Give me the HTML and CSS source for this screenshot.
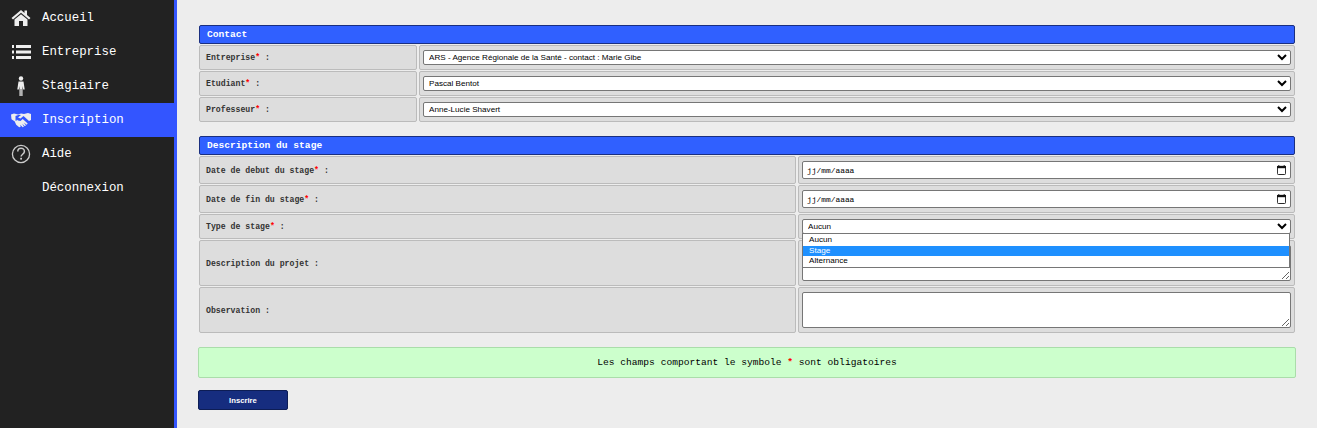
FILE: index.html
```html
<!DOCTYPE html>
<html lang="fr">
<head>
    <meta charset="utf-8">
    <title>Inscription</title>
    <link rel="stylesheet" href="styles.css">
</head>
<body>
<nav class="menu">
    <a class="menu-item" href="#">
        <svg class="menu-icon" viewBox="0 0 20 18"><path d="M10 1 L0.5 9 L2 10.5 L10 3.8 L18 10.5 L19.5 9 L16 6 V1.5 H13.5 V4 Z M10 5.2 L3.5 10.6 V17 H8 V12 H12 V17 H16.5 V10.6 Z" fill="#eee"/></svg>
        Accueil
    </a>
    <a class="menu-item" href="#">
        <svg class="menu-icon" viewBox="0 0 20 18"><path d="M1 2h2v3h-2z M5 2h15v3h-15z M1 7.500h2v3h-2z M5 7.500h15v3h-15z M1 13h2v3h-2z M5 13h15v3h-15z" fill="#eee"/></svg>
        Entreprise
    </a>
    <a class="menu-item" href="#">
        <svg class="menu-icon" viewBox="0 0 20 20"><circle cx="10" cy="2.500" r="2.200" fill="#eee"/><path d="M7.500 5.500h5l1.200 8h-1.500l-.7-3.500v10h-1.200v-7h-.6v7h-1.200v-10l-.7 3.500h-1.500z" fill="#eee"/></svg>
        Stagiaire
    </a>
    <a class="menu-item active" href="#">
        <svg class="menu-icon" viewBox="0 0 20 16"><path d="M0 2.500l3 -1 4 1 3-1 3 .5 4-1 3 1v6l-2 1-5.500-5-3 2.500-2.500-1 3-2.500-2-.3-3.500 1.300v4.800l-1 .5-3-2z M3.500 9l2.300-.5v-1l1.200 1 2.500.5 2.200-2 5 4.500-1 1.200-3-2.200 2.200 2.700-1 1-2.700-2.500 1.700 3-1.200.5-2.500-2.500.5 2-1.500.5-3-2.500z" fill="#eee"/></svg>
        Inscription
    </a>
    <a class="menu-item" href="#">
        <svg class="menu-icon" viewBox="0 0 20 20"><circle cx="10" cy="10" r="8.600" fill="none" stroke="#ccc" stroke-width="1.300"/><path d="M6.800 7.500c0-4.200 6.600-4.200 6.600 0 0 2.600-3.300 2.800-3.300 5" fill="none" stroke="#ccc" stroke-width="1.500"/><rect x="9.200" y="13.800" width="1.800" height="1.800" fill="#ccc"/></svg>
        Aide
    </a>
    <a class="menu-item" href="#"><span class="menu-icon"></span>Déconnexion</a>
</nav>

<main class="content">
    <section class="bloc">
        <h2 class="titre">Contact</h2>
        <div class="ligne col-contact">
            <div class="cell libelle"><label>Entreprise<span class="req">*</span> :</label></div>
            <div class="cell"><select class="champ"><option>ARS - Agence Régionale de la Santé - contact : Marie Gibe</option></select></div>
        </div>
        <div class="ligne col-contact">
            <div class="cell libelle"><label>Etudiant<span class="req">*</span> :</label></div>
            <div class="cell"><select class="champ"><option>Pascal Bentot</option></select></div>
        </div>
        <div class="ligne col-contact">
            <div class="cell libelle"><label>Professeur<span class="req">*</span> :</label></div>
            <div class="cell"><select class="champ"><option>Anne-Lucie Shavert</option></select></div>
        </div>
    </section>

    <section class="bloc">
        <h2 class="titre">Description du stage</h2>
        <div class="ligne col-stage">
            <div class="cell libelle"><label>Date de debut du stage<span class="req">*</span> :</label></div>
            <div class="cell">
                <div class="champ date"><span>jj/mm/aaaa</span>
                    <svg class="cal" viewBox="0 0 10 11"><path d="M2 0v1.500M8 0v1.500" stroke="#111"/><rect x=".5" y="1.500" width="9" height="9" rx="1" fill="none" stroke="#111"/><rect x="0" y="1" width="10" height="2.500" fill="#111"/></svg>
                </div>
            </div>
        </div>
        <div class="ligne col-stage">
            <div class="cell libelle"><label>Date de fin du stage<span class="req">*</span> :</label></div>
            <div class="cell">
                <div class="champ date"><span>jj/mm/aaaa</span>
                    <svg class="cal" viewBox="0 0 10 11"><path d="M2 0v1.500M8 0v1.500" stroke="#111"/><rect x=".5" y="1.500" width="9" height="9" rx="1" fill="none" stroke="#111"/><rect x="0" y="1" width="10" height="2.500" fill="#111"/></svg>
                </div>
            </div>
        </div>
        <div class="ligne col-stage">
            <div class="cell libelle"><label>Type de stage<span class="req">*</span> :</label></div>
            <div class="cell ouvert">
                <select class="champ"><option>Aucun</option></select>
                <ul class="liste">
                    <li>Aucun</li>
                    <li class="survol">Stage</li>
                    <li>Alternance</li>
                </ul>
            </div>
        </div>
        <div class="ligne col-stage">
            <div class="cell libelle"><label>Description du projet :</label></div>
            <div class="cell"><textarea class="champ zone"></textarea></div>
        </div>
        <div class="ligne col-stage">
            <div class="cell libelle"><label>Observation :</label></div>
            <div class="cell"><textarea class="champ zone"></textarea></div>
        </div>
    </section>

    <p class="note">Les champs comportant le symbole <span class="req">*</span> sont obligatoires</p>
    <button class="envoyer" type="button">Inscrire</button>
</main>
</body>
</html>
```

FILE: styles.css
```css
html, body { height: 100%; }
body {
    margin: 0;
    display: flex;
    overflow: hidden;
    background: #ededed;
    font-family: "Liberation Mono", "Courier New", monospace;
    color: #222;
}

/* menu de gauche */
.menu {
    width: 174px;
    flex: none;
    padding-top: 1px;
    background: #222;
    border-right: 3px solid #3355ff;
}
.menu-item {
    display: flex;
    align-items: center;
    height: 34px;
    padding-left: 11px;
    color: #fff;
    font-size: 12.4px;
    text-decoration: none;
}
.menu-item.active { background: #3355ff; }
.menu-icon {
    width: 20px;
    height: 20px;
    flex: none;
    margin-right: 11px;
}

.content {
    flex: 1;
    padding: 25px 21px 0;
    min-width: 0;
}

.bloc { margin: 0 1px 14px; }
.titre {
    margin: 0 0 1px;
    height: 19px;
    box-sizing: border-box;
    padding-left: 7px;
    border: 1px solid #1a2f80;
    border-radius: 2px;
    background: #3060ff;
    color: #fff;
    font-size: 9.600px;
    font-weight: bold;
    line-height: 17px;
}

.ligne {
    display: grid;
    gap: 2px;
    margin-bottom: 1px;
}
.col-contact { grid-template-columns: 218px 1fr; }
.col-stage { grid-template-columns: 597px 1fr; }

.cell {
    position: relative;
    display: flex;
    align-items: center;
    padding: 4px 3px;
    border: 1px solid #bbb;
    border-radius: 2px;
    background: #ddd;
}
.libelle {
    padding-left: 6px;
    font-size: 8.200px;
    font-weight: bold;
    color: #333;
}
.req { color: #f00; font-weight: bold; }

.champ {
    flex: 1;
    width: 100%;
    height: 15px;
    margin: 0;
    padding-left: 1px;
    box-sizing: border-box;
    font-family: "Liberation Sans", Arial, sans-serif;
    font-size: 8.100px;
    background: #fff;
    color: #000;
    border: 1px solid #767676;
    border-radius: 2px;
}
.date {
    display: flex;
    align-items: center;
    justify-content: space-between;
    height: 18px;
    padding: 0 4px;
    font-family: "Liberation Mono", monospace;
    font-size: 7.900px;
}
.cal { width: 9px; height: 10px; }
.zone { display: block; height: 36px; }

.liste {
    position: absolute;
    left: 3px;
    right: 4px;
    top: 18px;
    margin: 0;
    padding: 1px 0 0;
    list-style: none;
    z-index: 2;
    background: #fff;
    border: 1px solid #767676;
    font-family: "Liberation Sans", Arial, sans-serif;
    font-size: 8.100px;
    line-height: 10.500px;
    color: #000;
}
.liste li { padding-left: 6px; }
.liste .survol { background: #1e90ff; color: #fff; }

.note {
    margin: 0 0 12px;
    height: 31px;
    box-sizing: border-box;
    border: 1px solid #aaddaa;
    border-radius: 2px;
    background: #ccffcc;
    text-align: center;
    color: #000;
    font-size: 9.600px;
    line-height: 29px;
}
.envoyer {
    display: block;
    width: 90px;
    height: 20px;
    padding: 0;
    border: 1px solid #0d1d55;
    border-radius: 2px;
    background: #162d7f;
    color: #fff;
    font-family: "Liberation Sans", Arial, sans-serif;
    font-size: 7.700px;
    font-weight: bold;
}
```
